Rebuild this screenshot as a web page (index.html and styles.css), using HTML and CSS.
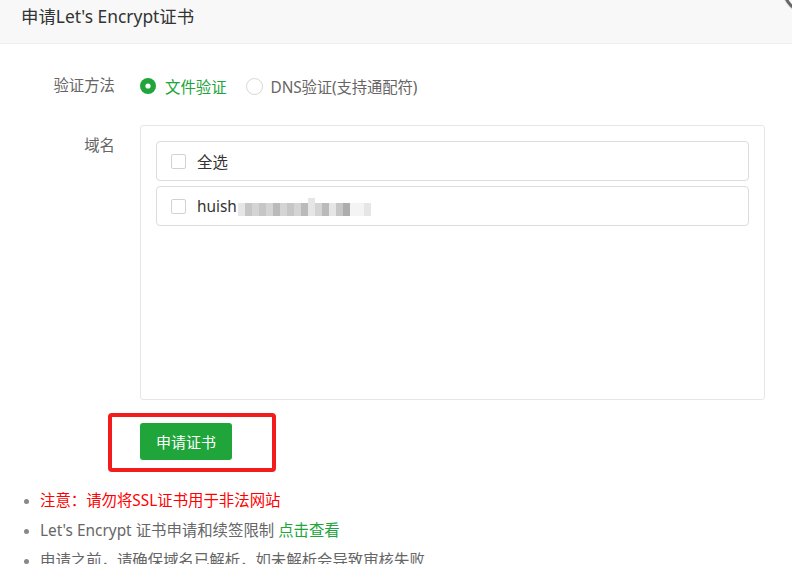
FILE: index.html
```html
<!DOCTYPE html>
<html lang="zh-CN">
<head>
<meta charset="utf-8">
<title>申请Let's Encrypt证书</title>
<link rel="stylesheet" href="styles.css">
</head>
<body>
<div class="layer">
  <div class="layer-title">申请Let's Encrypt证书</div>
  <span class="close-btn"></span>
  <div class="layer-content">
    <div class="form-row row-method">
      <label class="form-label">验证方法</label>
      <div class="form-field radios">
        <span class="radio checked">
          <svg class="radio-icon" viewBox="0 0 16 16" width="16" height="16"><circle cx="8" cy="8" r="8" fill="#20a53a"/><circle cx="8" cy="8" r="2.6" fill="#fff"/></svg>
          <span>文件验证</span>
        </span>
        <span class="radio">
          <span class="radio-empty"></span>
          <span class="dns-text">DNS验证(支持通配符)</span>
        </span>
      </div>
    </div>
    <div class="form-row row-domain">
      <label class="form-label label-domain">域名</label>
      <div class="domain-box">
        <div class="domain-item"><span class="checkbox"></span><span class="item-text">全选</span></div>
        <div class="domain-item"><span class="checkbox"></span><span class="item-text">huish</span><span class="mosaic"><i class="m1"></i><i class="m3"></i><i class="m2"></i><i class="m3"></i><i class="m2"></i><i class="m4"></i><i class="m2"></i><i class="m3"></i><i class="m2"></i><i class="m4"></i><i class="m1 tall"></i><i class="m2"></i><i class="m4"></i><i class="m1"></i><i class="m3"></i><i class="m5"></i><i class="m0"></i><i class="m0"></i><i class="m1"></i></span></div>
      </div>
    </div>
    <div class="btn-row">
      <button class="btn-apply">申请证书</button>
      <span class="highlight-box"></span>
    </div>
    <ul class="tips">
      <li class="tip-red">注意：请勿将SSL证书用于非法网站</li>
      <li>Let's Encrypt 证书申请和续签限制 <a class="link">点击查看</a></li>
      <li>申请之前，请确保域名已解析，如未解析会导致审核失败</li>
    </ul>
  </div>
</div>
</body>
</html>
```

FILE: styles.css
```css
* { box-sizing: border-box; }
html, body { margin: 0; padding: 0; background: #fff; overflow: hidden; }
body {
  width: 792px;
  height: 564px;
  font-family: "Noto Sans", "Noto Sans CJK SC", sans-serif;
  font-size: 15.4px;
  color: #666;
}
.layer { position: relative; width: 792px; height: 564px; overflow: hidden; }
.layer-title {
  height: 44px;
  background: #f8f8f8;
  border-bottom: 1px solid #eee;
  padding-left: 21px;
  line-height: 32px;
  font-size: 17.4px;
  color: #333;
}
.close-btn {
  position: absolute;
  left: 783px;
  top: -33px;
  width: 46px;
  height: 46px;
  border-radius: 50%;
  background: #f8f8f8;
  border: 3px solid #666;
  box-shadow: 0 0 0 1px #ddd;
}
.layer-content { padding-top: 23px; }
.form-row { display: flex; align-items: flex-start; }
.form-label {
  width: 115px;
  text-align: right;
  color: #666;
  flex: none;
  line-height: 38px;
  margin-right: 25px;
}
.row-method { height: 38px; }
.radios { display: flex; align-items: center; height: 38px; }
.radio { display: flex; align-items: center; margin-right: 8px; color: #666; }
.radio.checked { color: #20a53a; margin-right: 19px; }
.dns-text { letter-spacing: -0.15px; }
.radio-icon { margin-right: 9px; flex: none; }
.radio-empty {
  width: 17px; height: 17px; border-radius: 50%;
  border: 1px solid #d6d6d6; margin-right: 8px; flex: none;
}
.row-domain { margin-top: 20px; }
.label-domain { padding-top: 2px; }
.domain-box {
  width: 625px;
  height: 275px;
  border: 1px solid #e6e6e6;
  border-radius: 3px;
  padding: 15px;
  display: flex;
  flex-direction: column;
  gap: 5px;
}
.domain-item {
  height: 40px;
  border: 1px solid #dcdce0;
  border-radius: 4px;
  display: flex;
  align-items: center;
  padding-left: 14px;
  color: #333;
}
.checkbox {
  width: 15px; height: 15px;
  border: 1px solid #d2d2d2;
  border-radius: 2px;
  margin-right: 11px;
  flex: none;
}
.mosaic { display: flex; align-items: center; height: 16px; margin-left: 1px; margin-top: 6px; }
.mosaic i { display: block; width: 7px; height: 13px; }
.mosaic i.tall { height: 18px; margin-top: -5px; }
.m0 { background: #f4f4f4; }
.m1 { background: #e6e6e6; }
.m2 { background: #d4d4d4; }
.m3 { background: #c6c6c6; }
.m4 { background: #bababa; }
.m5 { background: #adadad; }
.btn-row { position: relative; margin-top: 23px; padding-left: 140px; height: 38px; }
.btn-apply {
  display: block;
  width: 92px;
  height: 37px;
  border: none;
  border-radius: 3px;
  background: #20a53a;
  color: #fff;
  font-family: inherit;
  font-size: 15px;
  padding: 0;
}
.highlight-box {
  position: absolute;
  left: 108px;
  top: -10px;
  width: 168px;
  height: 59px;
  border: 4px solid #f21c1c;
  border-radius: 4px;
}
.tips {
  margin: 25px 0 0 0;
  padding-left: 40px;
  list-style: none;
}
.tips li {
  position: relative;
  line-height: 30px;
  color: #666;
}
.tips li::before {
  content: "";
  position: absolute;
  left: -16px;
  top: 13px;
  width: 5px;
  height: 5px;
  border-radius: 50%;
  background: #888;
}
.tips li.tip-red { color: #ff0000; }
.link { color: #20a53a; text-decoration: none; }
```
